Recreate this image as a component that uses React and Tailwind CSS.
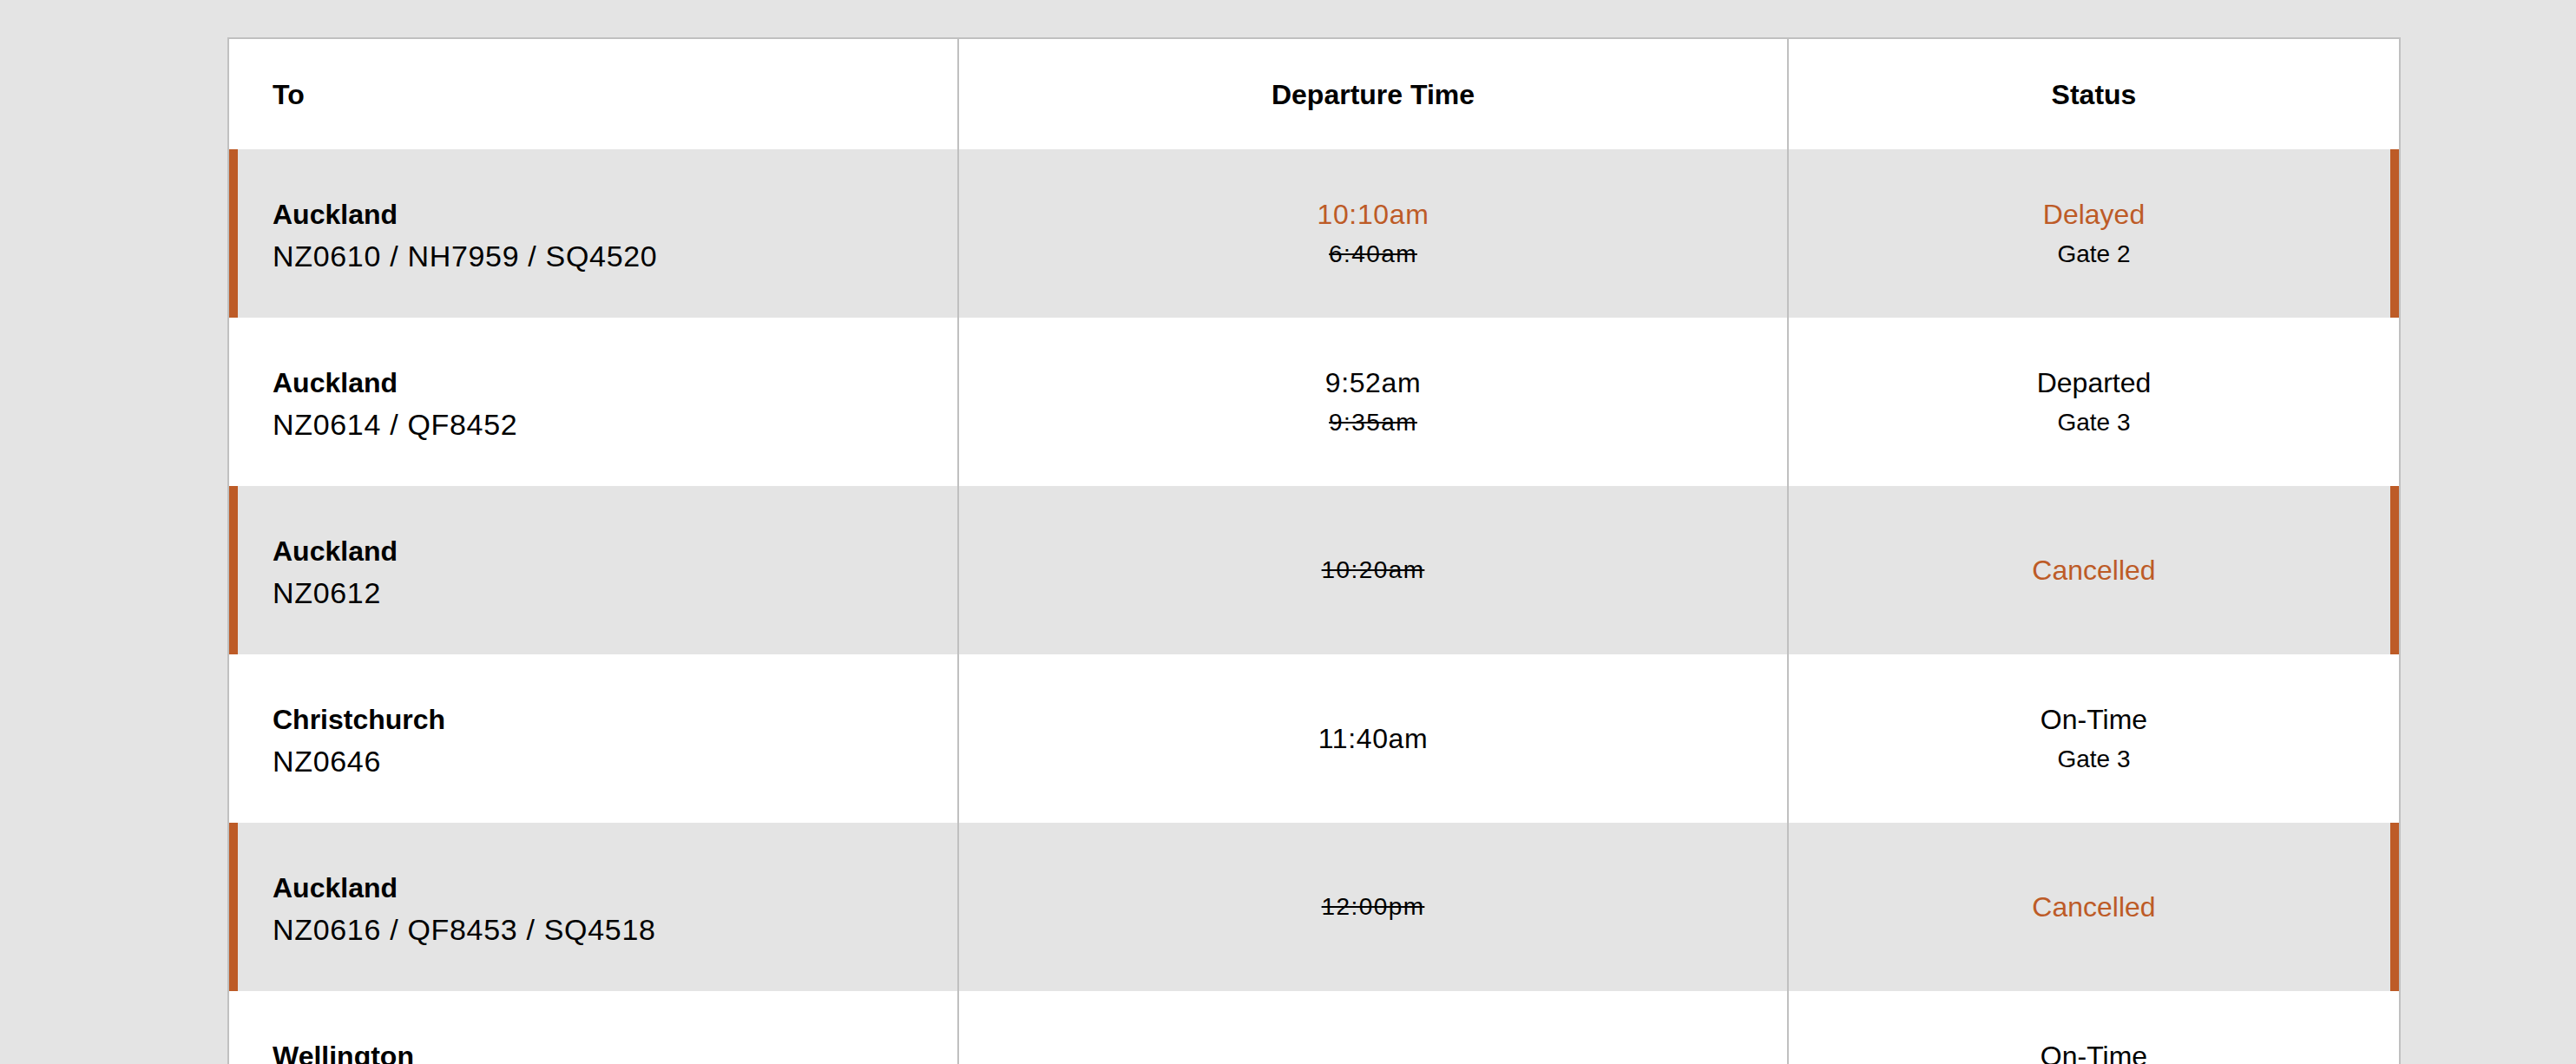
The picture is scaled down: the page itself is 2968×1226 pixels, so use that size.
const flights = [
  {
    city: 'Auckland',
    codes: 'NZ0610 / NH7959 / SQ4520',
    time: '10:10am',
    was: '6:40am',
    status: 'Delayed',
    gate: 'Gate 2',
    alert: true,
  },
  {
    city: 'Auckland',
    codes: 'NZ0614 / QF8452',
    time: '9:52am',
    was: '9:35am',
    status: 'Departed',
    gate: 'Gate 3',
    alert: false,
  },
  {
    city: 'Auckland',
    codes: 'NZ0612',
    time: null,
    was: '10:20am',
    status: 'Cancelled',
    gate: null,
    alert: true,
  },
  {
    city: 'Christchurch',
    codes: 'NZ0646',
    time: '11:40am',
    was: null,
    status: 'On-Time',
    gate: 'Gate 3',
    alert: false,
  },
  {
    city: 'Auckland',
    codes: 'NZ0616 / QF8453 / SQ4518',
    time: null,
    was: '12:00pm',
    status: 'Cancelled',
    gate: null,
    alert: true,
  },
  {
    city: 'Wellington',
    codes: 'NZ0449',
    time: '10:45am',
    was: null,
    status: 'On-Time',
    gate: 'Gate 4',
    alert: false,
  },
];

const FlightRow = ({ flight }) => {
  const { city, codes, time, was, status, gate, alert } = flight;
  const delayed = status === 'Delayed';

  return (
    <div
      className={`grid grid-cols-[839px_956px_705px] h-[194px] ${
        alert ? 'bg-[#e4e4e4]' : 'bg-white'
      }`}
    >
      {/* Destination */}
      <div
        className={`flex flex-col justify-center gap-2 pt-1 pl-[50px] ${
          alert ? 'shadow-[inset_10px_0_0_#bd5b27]' : ''
        }`}
      >
        <div className="text-[32px] leading-[40px] font-bold">{city}</div>
        <div className="text-[34px] leading-[40px] tracking-[0.02em]">{codes}</div>
      </div>

      {/* Departure time */}
      <div className="flex flex-col justify-center items-center border-l-2 border-[#c0c0c0]">
        {time && (
          <div
            className={`text-[32px] leading-[44px] tracking-[0.02em] ${
              delayed ? 'text-[#bd5b27]' : 'text-black'
            }`}
          >
            {time}
          </div>
        )}
        {was && (
          <div
            className={`text-[28px] leading-[40px] tracking-[0.05em] line-through ${
              time ? 'mt-1' : ''
            }`}
          >
            {was}
          </div>
        )}
      </div>

      {/* Status */}
      <div
        className={`flex flex-col justify-center items-center border-l-2 border-[#c0c0c0] ${
          alert ? 'shadow-[inset_-10px_0_0_#bd5b27]' : ''
        }`}
      >
        <div
          className={`text-[32px] leading-[44px] ${
            alert ? 'text-[#bd5b27]' : 'text-black'
          }`}
        >
          {status}
        </div>
        {gate && <div className="mt-1 text-[28px] leading-[40px]">{gate}</div>}
      </div>
    </div>
  );
};

const App = () => {
  return (
    <div className="min-h-screen bg-[#e4e4e4] pt-[43px] pl-[262px] font-['Liberation_Sans',Arial,sans-serif] text-black">
      <div className="w-[2504px] border-2 border-[#c0c0c0] bg-white">
        {/* Header */}
        <div className="grid grid-cols-[839px_956px_705px] h-[127px] text-[32px] font-bold">
          <div className="flex items-center pl-[50px]">To</div>
          <div className="flex items-center justify-center border-l-2 border-[#c0c0c0]">
            Departure Time
          </div>
          <div className="flex items-center justify-center border-l-2 border-[#c0c0c0]">
            Status
          </div>
        </div>

        {flights.map((flight, index) => (
          <FlightRow key={index} flight={flight} />
        ))}
      </div>
    </div>
  );
};

export default App;
